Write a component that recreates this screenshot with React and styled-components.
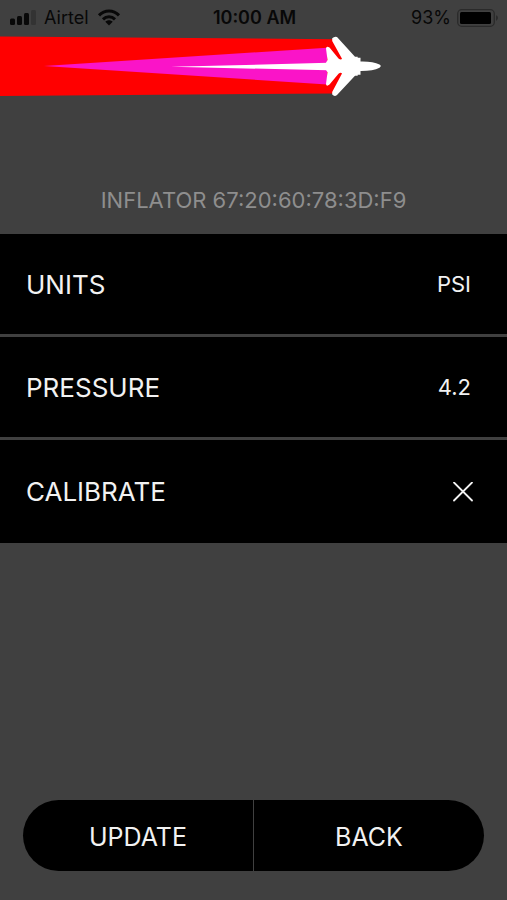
import React, { useState } from "react";
import styled, { createGlobalStyle } from "styled-components";

const GlobalStyle = createGlobalStyle`
  * {
    box-sizing: border-box;
  }
  body {
    margin: 0;
    background-color: #404040;
    font-family: Inter, "Liberation Sans", sans-serif;
  }
`;

const Screen = styled.div`
  display: flex;
  flex-direction: column;
  min-height: 100vh;
  background-color: #404040;
`;

const StatusBar = styled.header`
  display: grid;
  grid-template-columns: 1fr auto 1fr;
  align-items: center;
  height: 35px;
  margin-bottom: 1px;
  padding: 0 8px 0 10px;
  color: #080808;
  font-size: 18px;
`;

const StatusGroup = styled.div`
  display: flex;
  align-items: center;
  justify-content: ${(props) => (props.$end ? "flex-end" : "flex-start")};
  gap: ${(props) => (props.$end ? "6px" : "8px")};
`;

const Clock = styled.span`
  font-weight: 600;
`;

const Banner = styled.svg`
  display: block;
  flex: none;
`;

const DeviceName = styled.h1`
  margin: 0;
  padding: 88px 20px 19px;
  color: #8e8e8e;
  font-size: 22px;
  font-weight: 400;
  line-height: 30px;
  text-align: center;
`;

const SettingsList = styled.ul`
  display: flex;
  flex-direction: column;
  gap: 3px;
  margin: 0;
  padding: 0;
  list-style: none;
`;

const SettingRow = styled.li`
  display: flex;
  align-items: center;
  justify-content: space-between;
  height: 100px;
  padding: 0 36px 0 26px;
  background-color: black;
  color: #f2f2f2;

  &:last-child {
    height: 103px;
    padding-right: 34px;
  }
`;

const SettingLabel = styled.span`
  font-size: 26px;
`;

const SettingValue = styled.span`
  font-size: 22px;
`;

const IconButton = styled.button`
  display: flex;
  padding: 0;
  border: none;
  background: none;
  color: inherit;
`;

const Actions = styled.footer`
  display: flex;
  gap: 1px;
  margin-top: auto;
  padding: 0 23px 29px;
`;

const ActionButton = styled.button`
  flex: 1;
  height: 71px;
  padding: 2px 0 0;
  border: none;
  border-radius: ${(props) => (props.$last ? "0 36px 36px 0" : "36px 0 0 36px")};
  background-color: black;
  color: #f2f2f2;
  font-family: inherit;
  font-size: 25px;
`;

const SignalIcon = () => (
  <svg width="26" height="16" viewBox="0 0 26 16" aria-hidden="true">
    <rect x="0" y="8.5" width="5" height="6.5" rx="1.5" fill="#080808" />
    <rect x="7" y="6" width="5" height="9" rx="1.5" fill="#080808" />
    <rect x="14" y="3" width="5" height="12" rx="1.5" fill="#080808" />
    <rect x="21" y="0" width="5" height="15" rx="1.5" fill="#333" />
  </svg>
);

const WifiIcon = () => (
  <svg width="24" height="17" viewBox="0 0 24 17" aria-hidden="true">
    <g fill="none" stroke="#080808" strokeWidth="3">
      <path d="M2 6.4C7.6 .6 16.4 .6 22 6.4" />
      <path d="M6 10.4c3.4-3.4 8.6-3.4 12 0" />
    </g>
    <path d="M8.3 12.7c2.2-2 5.2-2 7.4 0L12 16.6z" fill="#080808" />
  </svg>
);

const BatteryIcon = () => (
  <svg width="42" height="18" viewBox="0 0 42 18" aria-hidden="true">
    <rect x=".7" y=".7" width="36.6" height="16.6" rx="4" fill="none" stroke="#2a2a2a" strokeWidth="1.3" />
    <rect x="3" y="3" width="31" height="12" rx="1.5" fill="black" />
    <path d="M39 6.3c2.6.8 2.6 4.6 0 5.4z" fill="#2a2a2a" />
  </svg>
);

const CloseIcon = () => (
  <svg width="20" height="20" viewBox="0 0 20 20" aria-hidden="true">
    <path d="M1 0.5l18 18M19 0.5L1 18.5" stroke="currentColor" strokeWidth="1.8" strokeLinecap="round" />
  </svg>
);

const JetBanner = () => (
  <Banner width="382" height="61" viewBox="0 36 382 61" aria-hidden="true">
    <path d="M0 36.5L254 38.6L335 39.3L344 60V72L334 93.5L254 94L0 96z" fill="#ff0000" />
    <path d="M44 66L327 47.8V84.5z" fill="#fa14c8" />
    <path d="M171 66.8L328 62.8V70.2z" fill="white" />
    <path
      fill="white"
      d="M326 62.7L327.5 60L326 48.5Q326.4 45.6 329.5 47.6L338.5 58.5
      Q341 60.2 342 58.8L332.2 41V38.2Q334.5 36 337 37L355 56.7H357.7V57.7H360.5V61.5
      Q373 61.2 379.5 64.6Q382 66 379.5 67.7Q373 71 360.5 70.9V74.7H357.7V75.7H355
      L337 95Q334.5 97 332.2 94.5V92L342 73.5Q341 72 338.5 73.7L329.5 84.6
      Q326.4 87 326 84L327.5 72.3L326 70z"
    />
  </Banner>
);

const App = () => {
  const [calibrate, setCalibrate] = useState(false);

  return (
    <>
      <GlobalStyle />
      <Screen>
        <StatusBar>
          <StatusGroup>
            <SignalIcon />
            <span>Airtel</span>
            <WifiIcon />
          </StatusGroup>
          <Clock>10:00 AM</Clock>
          <StatusGroup $end>
            <span>93%</span>
            <BatteryIcon />
          </StatusGroup>
        </StatusBar>
        <JetBanner />
        <DeviceName>INFLATOR 67:20:60:78:3D:F9</DeviceName>
        <SettingsList>
          <SettingRow>
            <SettingLabel>UNITS</SettingLabel>
            <SettingValue>PSI</SettingValue>
          </SettingRow>
          <SettingRow>
            <SettingLabel>PRESSURE</SettingLabel>
            <SettingValue>4.2</SettingValue>
          </SettingRow>
          <SettingRow>
            <SettingLabel id="calibrate-label">CALIBRATE</SettingLabel>
            <IconButton
              type="button"
              aria-labelledby="calibrate-label"
              aria-pressed={calibrate}
              onClick={() => setCalibrate(!calibrate)}
            >
              <CloseIcon />
            </IconButton>
          </SettingRow>
        </SettingsList>
        <Actions>
          <ActionButton type="button">UPDATE</ActionButton>
          <ActionButton type="button" $last>
            BACK
          </ActionButton>
        </Actions>
      </Screen>
    </>
  );
};

export default App;
